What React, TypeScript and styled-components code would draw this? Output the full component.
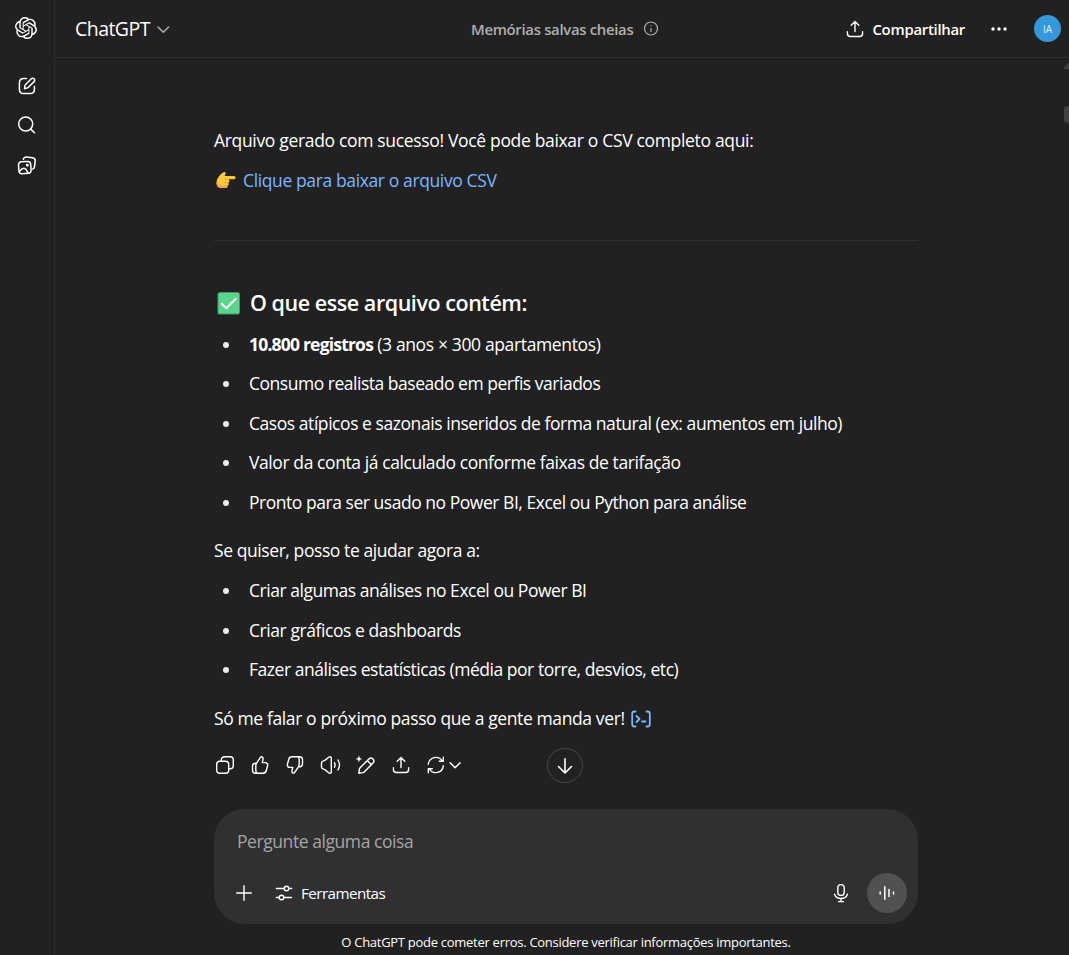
import React from "react";
import styled, { createGlobalStyle } from "styled-components";
import { SiOpenai } from "react-icons/si";

const GlobalStyle = createGlobalStyle`
  *, *::before, *::after { box-sizing: border-box; }
  html, body { margin: 0; padding: 0; background: #212121; overflow: hidden; }
  body { font-family: "Open Sans", "Noto Sans", sans-serif; color: #fff; }
  svg { display: block; flex: none; }
  button { background: none; border: 0; padding: 0; margin: 0; color: inherit; font: inherit; }
  p, h1, h3, ul { margin: 0; padding: 0; }
`;

const Shell = styled.div`
  display: flex;
  width: 1069px;
  height: 955px;
  background: #212121;
`;

const Sidebar = styled.nav`
  width: 55px;
  flex: none;
  border-right: 1px solid #2e2e2e;
  display: flex;
  flex-direction: column;
  align-items: center;
  padding-top: 17px;
`;

const Logo = styled.div`
  height: 22px;
  margin-bottom: 36px;
  margin-right: 2px;
`;

const NavButton = styled.button`
  width: 22px;
  height: 22px;
  margin-bottom: 17px;
  & + & + & {
    margin-top: 1px;
  }
`;

const Main = styled.main`
  flex: 1;
  min-width: 0;
  display: flex;
  flex-direction: column;
`;

const Header = styled.header`
  height: 58px;
  flex: none;
  border-bottom: 1px solid #2e2e2e;
  display: grid;
  grid-template-columns: 396px 1fr auto;
  align-items: center;
  padding: 0 8px 0 20px;
`;

const HeaderGroup = styled.div<{ $gap: number }>`
  display: flex;
  align-items: center;
  gap: ${(p) => p.$gap}px;
`;

const Label = styled.span<{ $size: number; $weight?: number; $ls?: number; $color?: string }>`
  font-size: ${(p) => p.$size}px;
  font-weight: ${(p) => p.$weight ?? 400};
  letter-spacing: ${(p) => p.$ls ?? 0}px;
  color: ${(p) => p.$color ?? "#fff"};
  white-space: nowrap;
  line-height: 28px;
`;

const MoreButton = styled.button`
  margin: 0 26px 0 25px;
`;

const Avatar = styled.div`
  width: 27px;
  height: 27px;
  border-radius: 50%;
  background: #3498db;
  color: #e4f1fa;
  font-size: 10px;
  display: grid;
  place-items: center;
`;

const Body = styled.div`
  flex: 1;
  display: flex;
  justify-content: space-between;
  padding-left: 159px;
`;

const Column = styled.div`
  width: 704px;
  position: relative;
`;

const Scrollbar = styled.div`
  width: 5px;
  padding-top: 4px;
  overflow: hidden;
`;

const ScrollThumb = styled.div`
  width: 12px;
  height: 17px;
  margin-top: 37px;
  border-radius: 4px;
  background: #424242;
`;

const Line = styled.p<{ $top?: number; $ls?: number }>`
  display: flex;
  align-items: center;
  height: 28px;
  margin-top: ${(p) => p.$top ?? 11.6}px;
  padding-bottom: 1px;
  font-size: 17.5px;
  line-height: 27px;
  letter-spacing: ${(p) => p.$ls ?? -0.4}px;
  white-space: pre;
`;

const Link = styled.a`
  color: #7ab7ff;
  margin-left: 7px;
`;

const Divider = styled.div`
  height: 1px;
  background: #303030;
  margin-top: 45px;
`;

const Heading = styled.h3`
  display: flex;
  align-items: center;
  gap: 10px;
  height: 32px;
  margin: 46px 0 0 3px;
  font-size: 21.5px;
  font-weight: 600;
  letter-spacing: -0.45px;
  white-space: nowrap;
`;

const CheckMark = styled.svg`
  margin-top: 1px;
`;

const List = styled.ul<{ $top: number }>`
  list-style: none;
  margin-top: ${(p) => p.$top}px;
  display: flex;
  flex-direction: column;
  gap: 11.6px;
`;

const Item = styled.li<{ $ls?: number }>`
  display: flex;
  align-items: center;
  height: 28px;
  padding: 0 0 1px 9px;
  font-size: 17.5px;
  line-height: 27px;
  letter-spacing: ${(p) => p.$ls ?? -0.4}px;
  white-space: pre;
  &::before {
    content: "";
    width: 6px;
    height: 6px;
    border-radius: 50%;
    background: #ececec;
    margin: 1px 20px 0 0;
    flex: none;
  }
`;

const Strong = styled.strong<{ $ls: number }>`
  font-weight: 700;
  letter-spacing: ${(p) => p.$ls}px;
`;

const Actions = styled.div`
  display: flex;
  gap: 13.2px;
  margin-top: 21px;
  height: 22px;
`;

const Regenerate = styled.button`
  display: flex;
  align-items: center;
`;

const ScrollDown = styled.button`
  position: absolute;
  left: 333px;
  top: 690px;
  width: 36px;
  height: 35px;
  border: 1px solid #454545;
  border-radius: 50%;
  background: #212121;
  display: grid;
  place-items: center;
`;

const Composer = styled.div`
  height: 115px;
  margin-top: 33px;
  border-radius: 31px;
  background: #303030;
  padding: 19px 11px 0 22px;
`;

const ComposerRow = styled.div`
  display: flex;
  align-items: center;
  height: 40px;
  margin-top: 17px;
`;

const Tools = styled.button`
  display: flex;
  align-items: center;
  gap: 6px;
  margin-left: 21px;
`;

const Voice = styled.button`
  width: 40px;
  height: 40px;
  border-radius: 50%;
  background: #515151;
  display: grid;
  place-items: center;
  margin-left: 15px;
`;

const Grow = styled.div`
  flex: 1;
`;

const Prompt = styled.div`
  height: 28px;
  padding: 0 0 2px 1px;
  display: flex;
  align-items: center;
`;

const Disclaimer = styled.div`
  display: flex;
  justify-content: center;
  margin-top: 4px;
`;

type IconProps = { children: React.ReactNode; w?: number; h?: number; color?: string; sw?: number };
const Icon = ({ children, w = 22, h = 22, color = "#fff", sw = 1.4 }: IconProps) => (
  <svg width={w} height={h} viewBox={`0 0 ${w} ${h}`} fill="none" stroke={color} strokeWidth={sw} strokeLinecap="round" strokeLinejoin="round">
    {children}
  </svg>
);

const ShareIcon = () => (
  <Icon>
    <path d="M3.4 13.7v1.7c0 2.2.9 3.1 3 3.1h9.2c2.1 0 3-.9 3-3.1v-1.7M11 13.6V3.6M7.2 7.2L11 3.4l3.8 3.8" />
  </Icon>
);

const THUMB =
  "M7.6 9.2L11.3 3.6c.9-1.4 2.8-.7 2.8 1 0 1.4-.5 2.8-.9 4h2.9c1.9 0 2.9 1.4 2.5 3.1l-1.3 4.8c-.4 1.7-1.6 2.7-3.3 2.7H6.5c-1.9 0-3-1.2-3-3v-4c0-1.8 1.1-3 3-3zM7.6 9.2c-.6.8-.8 1.7-.8 2.8v4c0 1.3.3 2.4 1.1 3.2";

export default function App() {
  return (
    <>
      <GlobalStyle />
      <Shell>
        <Sidebar>
          <Logo><SiOpenai size={22} /></Logo>
          <NavButton aria-label="Novo chat">
            <Icon sw={1.5}>
              <path d="M10.5 3.6H7.8c-3 0-4.4 1.4-4.4 4.4v6.2c0 3 1.4 4.4 4.4 4.4H14c3 0 4.4-1.4 4.4-4.4v-2.8" />
              <path d="M8.5 13.7l.5-3c.1-.5.3-.9.6-1.2l5.7-5.7a1.9 1.9 0 0 1 2.8 2.8l-5.7 5.7c-.3.3-.7.5-1.2.6z" />
            </Icon>
          </NavButton>
          <NavButton aria-label="Buscar">
            <Icon sw={1.5}>
              <circle cx="9.7" cy="10" r="7" />
              <path d="M14.8 15.1l3.7 3.7" />
            </Icon>
          </NavButton>
          <NavButton aria-label="Biblioteca">
            <Icon sw={1.5}>
              <rect x="2.7" y="7.6" width="12.2" height="12" rx="3" transform="rotate(-4 8.8 13.6)" />
              <path d="M7.3 5.2c.5-1.7 1.5-2.4 3.2-2.2l6 .7c2 .3 2.9 1.4 2.7 3.3l-.7 5.6c-.2 1.4-.8 2.2-1.9 2.5" />
              <path d="M3.5 17.3c2-2.3 4-3.6 5.6-2.6 1.2.7 1.9 2.4 3 4.2" />
              <circle cx="11.3" cy="11.3" r=".7" fill="#fff" />
            </Icon>
          </NavButton>
        </Sidebar>
        <Main>
          <Header>
            <HeaderGroup $gap={6.5}>
              <Label $size={19.5} $ls={-0.55}>ChatGPT</Label>
              <Icon w={14} h={14} color="#b4b4b4" sw={1.4}><path d="M2 5l5.3 5.3L12.600 5" /></Icon>
            </HeaderGroup>
            <HeaderGroup $gap={10}>
              <Label $size={14.9} $weight={600} $ls={-0.31} $color="#afafaf">Memórias salvas cheias</Label>
              <Icon w={16} h={16} color="#afafaf" sw={1.2}>
                <circle cx="8" cy="7.5" r="6.500" />
                <path d="M8 7.500v3M8 4.900v.1" />
              </Icon>
            </HeaderGroup>
            <HeaderGroup $gap={0}>
              <HeaderGroup $gap={6.3}>
                <ShareIcon />
                <Label $size={14.9} $weight={600} $ls={-0.27}>Compartilhar</Label>
              </HeaderGroup>
              <MoreButton aria-label="Mais">
                <Icon w={18} h={6} color="none">
                  <g fill="#fff"><circle cx="3" cy="3" r="1.700" /><circle cx="9" cy="3" r="1.700" /><circle cx="15" cy="3" r="1.700" /></g>
                </Icon>
              </MoreButton>
              <Avatar>IA</Avatar>
            </HeaderGroup>
          </Header>
          <Body>
            <Column>
              <Line $top={69} $ls={-0.33}>Arquivo gerado com sucesso! Você pode baixar o CSV completo aqui:</Line>
              <Line $ls={-0.38}>
                <svg width="22" height="20" viewBox="0 0 22 20">
                  <path d="M3 9.500C4.500 6.500 7 3.500 9.500 2.200c1.800-.8 2.800.8 1.800 2.200L10.500 6H20c2 0 2 3.200 0 3.200h-5.500c1.500 1.500 1 3-.2 3.500.9 1.300.4 2.500-.8 2.900.3 1.500-.6 2.400-2 2.400H7.500C4.500 18 2.500 16 2.500 13z" fill="#ffc83d" />
                  <path d="M14.500 9.200h-4M14.300 12.700h-3.500M13.500 15.600h-2.700" stroke="#f59f23" strokeWidth="1" />
                  <path d="M2.500 12c0 4 2 6 5 6h4c1.200 0 2-.7 2-1.600-3 .4-7 .2-11-4.400z" fill="#f8a05a" />
                </svg>
                <Link>Clique para baixar o arquivo CSV</Link>
              </Line>
              <Divider />
              <Heading>
                <CheckMark width="23" height="23" viewBox="0 0 23 23">
                  <rect x=".5" y=".5" width="22" height="22" rx="1.500" fill="#3b9b66" />
                  <rect x="1.500" y=".5" width="21" height="21" rx="1.500" fill="#5ad68c" />
                  <path d="M4.800 11.800l4.500 4.400L18.700 7" fill="none" stroke="#fff" strokeWidth="2" strokeLinecap="round" />
                </CheckMark>
                O que esse arquivo contém:
              </Heading>
              <List $top={12}>
                <Item $ls={-0.36}><Strong $ls={-0.8}>10.800 registros</Strong> (3 anos × 300 apartamentos)</Item>
                <Item $ls={-0.48}>Consumo realista baseado em perfis variados</Item>
                <Item $ls={-0.445}>Casos atípicos e sazonais inseridos de forma natural (ex: aumentos em julho)</Item>
                <Item $ls={-0.41}>Valor da conta já calculado conforme faixas de tarifação</Item>
                <Item $ls={-0.465}>Pronto para ser usado no Power BI, Excel ou Python para análise</Item>
              </List>
              <Line $top={20} $ls={-0.42}>Se quiser, posso te ajudar agora a:</Line>
              <List $top={12}>
                <Item $ls={-0.46}>Criar algumas análises no Excel ou Power BI</Item>
                <Item $ls={-0.43}>Criar gráficos e dashboards</Item>
                <Item $ls={-0.46}>Fazer análises estatísticas (média por torre, desvios, etc)</Item>
              </List>
              <Line $top={21} $ls={-0.385}>
                Só me falar o próximo passo que a gente manda ver!{" "}
                <Icon w={23} color="#7ab7ff" sw={1.8}>
                  <path d="M6.500 3.500h-1c-1.500 0-2.300.8-2.300 2.300v10.400c0 1.500.8 2.300 2.300 2.300h1M17.500 3.500h1c1.500 0 2.300.8 2.300 2.300v10.400c0 1.500-.8 2.300-2.300 2.300h-1M7.500 8l3 3-3 3M13 13.500h3.500" />
                </Icon>
              </Line>
              <Actions>
                <Icon>
                  <rect x="2.700" y="7.200" width="12" height="12" rx="3.200" />
                  <path d="M7.300 7V6c0-2 1.200-3.200 3.200-3.200h5.600c2 0 3.200 1.200 3.200 3.200v5.600c0 2-1.200 3.200-3.200 3.200h-1.300" />
                </Icon>
                <Icon><path d={THUMB} /></Icon>
                <Icon><path d={THUMB} transform="rotate(180 11 11)" /></Icon>
                <Icon>
                  <path d="M1.500 9c0-1 .6-1.600 1.500-1.900l1.800-.7L9.100 3c.9-.7 2.200-.1 2.200 1.100v13.800c0 1.200-1.300 1.800-2.200 1.100l-4.300-3.400-1.800-.7c-.9-.3-1.500-.9-1.500-1.900zM14.500 8.700c.7 1.400.7 3.200 0 4.600M17.900 6c1.900 3 1.900 7 0 10" />
                </Icon>
                <Icon>
                  <path d="M3.800 19.200l.6-4c.1-.6.3-1 .7-1.400l8.800-8.900a2.900 2.900 0 0 1 4.100 4.100l-8.800 8.900c-.4.4-.9.6-1.400.7zM12.300 6.600l4.100 4.100" />
                  <path d="M3.900 1.600l.95 2.350 2.350.95-2.350.95-.95 2.350-.95-2.350-2.350-.95 2.350-.95z" fill="#fff" stroke="none" />
                </Icon>
                <ShareIcon />
                <Regenerate aria-label="Regenerar">
                  <Icon>
                    <path d="M3.300 10.200a7.600 7.600 0 0 1 14-3.200M18.300 3.300v4h-4M18.300 11.800a7.600 7.600 0 0 1-14 3.200M3.300 18.700v-4h4" />
                  </Icon>
                  <Icon w={16} h={16} sw={1.5}><path d="M3.100 5.700l5 5 5-5" /></Icon>
                </Regenerate>
              </Actions>
              <ScrollDown aria-label="Rolar para baixo">
                <Icon sw={1.6}><path d="M11 3.800v14M4.500 11.500L11 18l6.500-6.500" /></Icon>
              </ScrollDown>
              <Composer>
                <Prompt><Label $size={17.5} $ls={-0.43} $color="#a5a5a5">Pergunte alguma coisa</Label></Prompt>
                <ComposerRow>
                  <Icon w={16} h={16}><path d="M8 .7v14.600M.7 8h14.600" /></Icon>
                  <Tools>
                    <Icon>
                      <circle cx="13.500" cy="6.500" r="2.300" /><circle cx="8.500" cy="15.500" r="2.300" />
                      <path d="M3.400 6.500h7.800M15.800 6.500h2.800M3.400 15.500h2.800M10.800 15.500h7.800" />
                    </Icon>
                    <Label $size={15.2} $ls={-0.55}>Ferramentas</Label>
                  </Tools>
                  <Grow />
                  <Icon>
                    <rect x="7.800" y="2.600" width="6.400" height="10.800" rx="3.200" />
                    <path d="M4.500 12.200c1 2.700 3.500 4.300 6.500 4.300s5.500-1.600 6.500-4.300M11 16.500v3M8.500 19.600h5" />
                  </Icon>
                  <Voice aria-label="Modo de voz">
                    <Icon sw={1.5}><path d="M4.200 10v2M8.800 4.700v12.600M13 7.500v7M17.500 10v2" /></Icon>
                  </Voice>
                </ComposerRow>
              </Composer>
              <Disclaimer>
                <Label $size={13} $ls={-0.28}>O ChatGPT pode cometer erros. Considere verificar informações importantes.</Label>
              </Disclaimer>
            </Column>
            <Scrollbar>
              <svg width="12" height="7" viewBox="0 0 12 7"><path d="M0 6.200L4.800.6h2.400L12 6.200V7H0z" fill="#424242" /></svg>
              <ScrollThumb />
            </Scrollbar>
          </Body>
        </Main>
      </Shell>
    </>
  );
}
